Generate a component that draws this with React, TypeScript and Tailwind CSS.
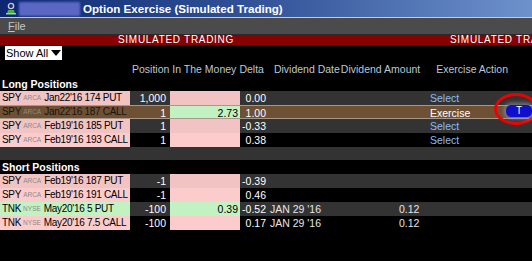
import React from 'react';

type Row = {
  sym: string;
  exch: string;
  desc: string;
  pos: string;
  itm?: string;
  delta: string;
  divDate?: string;
  divAmt?: string;
  action?: 'Select' | 'Exercise';
  stripe: boolean;
  selected?: boolean;
  descGreen?: boolean;
};

const longRows: Row[] = [
  { sym: 'SPY', exch: 'ARCA', desc: "Jan22'16 174 PUT", pos: '1,000', delta: '0.00', action: 'Select', stripe: true },
  { sym: 'SPY', exch: 'ARCA', desc: "Jan22'16 187 CALL", pos: '1', itm: '2.73', delta: '1.00', action: 'Exercise', stripe: false, selected: true },
  { sym: 'SPY', exch: 'ARCA', desc: "Feb19'16 185 PUT", pos: '1', delta: '-0.33', action: 'Select', stripe: true },
  { sym: 'SPY', exch: 'ARCA', desc: "Feb19'16 193 CALL", pos: '1', delta: '0.38', action: 'Select', stripe: false },
];

const shortRows: Row[] = [
  { sym: 'SPY', exch: 'ARCA', desc: "Feb19'16 187 PUT", pos: '-1', delta: '-0.39', stripe: true },
  { sym: 'SPY', exch: 'ARCA', desc: "Feb19'16 191 CALL", pos: '-1', delta: '0.46', stripe: false },
  { sym: 'TNK', exch: 'NYSE', desc: "May20'16 5 PUT", pos: '-100', itm: '0.39', delta: '-0.52', divDate: "JAN 29 '16", divAmt: '0.12', stripe: true, descGreen: true },
  { sym: 'TNK', exch: 'NYSE', desc: "May20'16 7.5 CALL", pos: '-100', delta: '0.17', divDate: "JAN 29 '16", divAmt: '0.12', stripe: false },
];

function PositionRow({ row }: { row: Row }) {
  const base = row.selected
    ? 'bg-[#6e5034] border-y border-[#a89888]'
    : row.stripe
      ? 'bg-[#333333]'
      : 'bg-black';
  const pink = row.stripe ? 'bg-[#f2c3c3]' : 'bg-[#fccccc]';
  const descBg = row.selected ? '' : row.descGreen ? 'bg-[#c2f2c2]' : pink;
  const itmBg = row.itm ? 'bg-[#c2f2c2]' : pink;

  return (
    <div className={`flex h-[14px] items-center text-[10.5px] leading-[14px] ${base}`}>
      <div className={`flex h-full w-[130px] shrink-0 items-center whitespace-nowrap pl-[2px] text-[10px] tracking-[-0.3px] ${descBg} ${row.selected ? 'text-[#1c140c]' : 'text-black'}`}>
        <span>{row.sym}</span>
        <span className="ml-[2px] mr-[3px] text-[6.5px] tracking-normal text-[#8a8a8a]">{row.exch}</span>
        <span>{row.desc}</span>
      </div>
      <div className="h-full w-[40px] shrink-0 pr-[4px] text-right text-white">{row.pos}</div>
      <div className={`h-full w-[70px] shrink-0 pr-[2px] text-right text-black ${itmBg}`}>{row.itm}</div>
      <div className="h-full w-[26px] shrink-0 text-right text-white">{row.delta}</div>
      <div className="h-full w-[75px] shrink-0 pl-[4px] whitespace-nowrap text-[#e6e6e6]">{row.divDate}</div>
      <div className="h-full w-[81px] shrink-0 pl-[58px] text-[#e6e6e6]">{row.divAmt}</div>
      <div className={`h-full pl-[8px] ${row.action === 'Exercise' ? 'text-white' : 'text-[#8cbcf4]'}`}>{row.action}</div>
    </div>
  );
}

export default function App() {
  return (
    <div className="relative h-[261px] w-[532px] overflow-hidden bg-black font-['Liberation_Sans',Arial,sans-serif]">
      {/* title bar */}
      <div className="flex h-[17px] items-center bg-gradient-to-r from-[#0d2772] via-[#34559a] to-[#6e92cc]">
        <svg width="14" height="13" viewBox="0 0 14 13" className="ml-[4px]">
          <circle cx="7" cy="4" r="2.6" fill="none" stroke="#c8c8d0" strokeWidth="1.4" />
          <path d="M3 12 L4 8 L10 8 L11 12 Z" fill="#4ab04a" />
          <rect x="2" y="11" width="10" height="1.5" fill="#9ad09a" />
        </svg>
        <div className="ml-[1px] h-[14px] w-[61px] rounded-[1px] bg-[#5a68c4] blur-[1px]" />
        <span className="ml-[3px] whitespace-nowrap text-[11.6px] font-bold leading-[17px] text-white">
          Option Exercise (Simulated Trading)
        </span>
      </div>
      <div className="h-px bg-[#c4ccdc]" />
      {/* menu */}
      <div className="flex h-[16px] items-center bg-[#4b4b4b] pl-[8px] text-[11px] text-[#c4c4c4]">
        <span>
          <span className="underline">F</span>ile
        </span>
      </div>
      <div className="h-px bg-[#2a2a2a]" />
      {/* simulated band */}
      <div className="flex h-[10px] items-center overflow-hidden whitespace-nowrap bg-[#880000] text-[10px] leading-[10px] tracking-[0.7px] text-white">
        <span className="ml-[118px] shrink-0">SIMULATED TRADING</span>
        <span className="ml-[216px] shrink-0">SIMULATED TRADING</span>
      </div>
      {/* filter */}
      <div className="mt-px pl-[5px]">
        <div className="flex h-[14px] w-[57px] items-center whitespace-nowrap bg-white pl-[1px] text-[11px] text-black">
          <span>Show All</span>
          <svg width="10" height="6" viewBox="0 0 10 6" className="ml-[3px] shrink-0">
            <path d="M0 0 L10 0 L5 6 Z" fill="black" />
          </svg>
        </div>
      </div>
      {/* header */}
      <div className="flex h-[17px] items-end whitespace-nowrap pb-px text-[10.5px] leading-[14px] text-[#b8c8d8]">
        <span className="ml-[132px]">Position</span>
        <span className="ml-[3px]">In The Money</span>
        <span className="ml-[3px]">Delta</span>
        <span className="ml-[10px]">Dividend Date</span>
        <span className="ml-[1px]">Dividend Amount</span>
        <span className="ml-[16px]">Exercise Action</span>
      </div>
      <div className="h-[14px] pl-[2px] text-[10.5px] font-bold leading-[14px] text-white">Long Positions</div>
      {longRows.map((r, i) => (
        <PositionRow key={i} row={r} />
      ))}
      <div className="h-[13px] bg-[#333333]" />
      <div className="h-[14px] pl-[2px] text-[10.5px] font-bold leading-[14px] text-white">Short Positions</div>
      {shortRows.map((r, i) => (
        <PositionRow key={i} row={r} />
      ))}

      {/* highlighted transmit button */}
      <div className="absolute left-[494px] top-[93px] h-[32px] w-[44px] rounded-[50%] border-[3px] border-[#ee0000]">
        <div className="absolute left-[9px] top-[9px] flex h-[12px] w-[26px] items-center justify-center rounded-[5px] bg-[#1010cc] text-[10px] leading-[12px] text-white shadow-[0_0_4px_2px_rgba(150,150,170,0.7)]">
          T
        </div>
      </div>
    </div>
  );
}
